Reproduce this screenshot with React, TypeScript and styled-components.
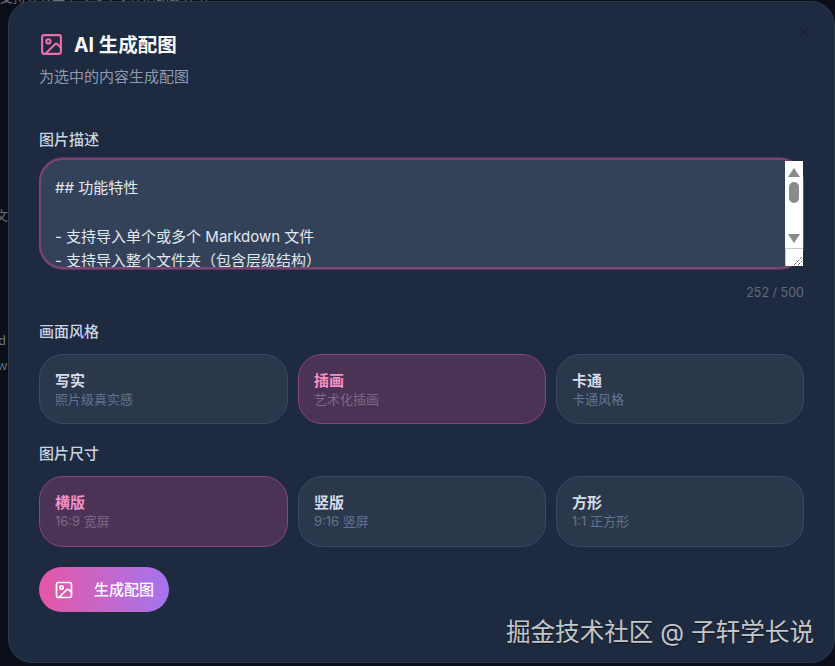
import React from "react";
import styled, { createGlobalStyle } from "styled-components";
import { Image as ImageIcon, X } from "lucide-react";

const Global = createGlobalStyle`
  html, body { margin: 0; padding: 0; width: 835px; height: 666px; overflow: hidden; background: #0b0f1a; }
  * { box-sizing: border-box; }
  body { font-family: Inter, "Noto Sans CJK SC", "Noto Sans", sans-serif; }
`;

const Page = styled.div`
  position: relative;
  width: 835px;
  height: 666px;
  padding: 1px 0 3px 8px;
  overflow: hidden;
`;

const BackdropText = styled.span<{ $x: number; $y: number }>`
  position: absolute;
  left: ${(p) => p.$x}px;
  top: ${(p) => p.$y}px;
  font-size: 13px;
  line-height: 16px;
  color: #6b6f78;
  white-space: nowrap;
  font-family: "Noto Sans CJK SC", "DejaVu Sans Mono", monospace;
`;

const Dialog = styled.div`
  position: relative;
  width: 827px;
  height: 662px;
  padding: 30px 30px 0;
  border-radius: 24px;
  border: 1px solid #2c3a4e;
  background: #1e2a3f;
`;

const CloseButton = styled.button`
  position: absolute;
  right: 23px;
  top: 23px;
  padding: 0;
  width: 14px;
  height: 14px;
  display: flex;
  border: 0;
  background: none;
  color: #172135;
`;

const TitleRow = styled.div`
  display: flex;
  align-items: center;
  gap: 10px;
  height: 24px;
  color: #ec6fae;
`;

const Title = styled.h2`
  margin: 2px 0 0;
  font-size: 19.5px;
  line-height: 24px;
  font-weight: 700;
  color: #f8fafc;
`;

const Subtitle = styled.p`
  margin: 11px 0 0;
  font-size: 15px;
  line-height: 20px;
  color: #8d9bb0;
`;

const FieldLabel = styled.div<{ $top: number }>`
  margin-top: ${(p) => p.$top}px;
  font-size: 15px;
  line-height: 20px;
  font-weight: 500;
  color: #cbd5e1;
`;

const TextFrame = styled.div`
  position: relative;
  margin-top: 8px;
  height: 111px;
  border: 2px solid #7a4574;
  box-shadow: 0 -1px 0 rgba(122, 69, 116, 0.6), 0 1px 0 rgba(122, 69, 116, 0.6);
  border-radius: 24px;
  background: #334259;
`;

const TextContent = styled.div`
  height: 100%;
  overflow: hidden;
  padding: 15.5px 14px 0;
  border-radius: 22px;
  font-size: 15px;
  line-height: 24.5px;
  color: #e2e8f0;
  white-space: pre-wrap;
`;

const ScrollBar = styled.div`
  position: absolute;
  right: -1px;
  top: 1px;
  bottom: 1px;
  width: 18px;
  background: #fff;
  display: flex;
  flex-direction: column;
  align-items: center;
`;

const ScrollArrow = styled.svg<{ $top: number }>`
  margin-top: ${(p) => p.$top}px;
  width: 12px;
  height: 9px;
  flex: none;
  fill: #8a8a8a;
`;

const ScrollThumb = styled.div`
  margin-top: 5px;
  width: 10px;
  height: 21px;
  flex: none;
  border-radius: 5px;
  background: #8a8a8a;
`;

const Resizer = styled.div`
  margin-top: auto;
  width: 100%;
  height: 18px;
  flex: none;
  border-top: 1px solid #c8c8c8;
  border-left: 1px solid #c8c8c8;
  display: flex;
  align-items: flex-end;
  justify-content: flex-end;
`;

const Counter = styled.div`
  margin-top: 15px;
  text-align: right;
  font-size: 12.5px;
  line-height: 18px;
  color: #5f6d82;
`;

const OptionGrid = styled.div`
  margin-top: 12px;
  display: grid;
  grid-template-columns: 249px 248px 248px;
  gap: 10px;
`;

const OptionCard = styled.div<{ $active?: boolean; $h: number }>`
  height: ${(p) => p.$h}px;
  padding: 16px 15px 0;
  border-radius: 24px;
  border: 1px solid ${(p) => (p.$active ? "#8b4675" : "#3a4a60")};
  background: ${(p) => (p.$active ? "#4a3355" : "#2b384c")};
`;

const OptionName = styled.div<{ $active?: boolean }>`
  font-size: 15px;
  line-height: 20px;
  font-weight: 600;
  color: ${(p) => (p.$active ? "#f490c4" : "#d5dde8")};
`;

const OptionHint = styled.div<{ $active?: boolean }>`
  font-size: 13px;
  line-height: 17px;
  color: ${(p) => (p.$active ? "#7d6a85" : "#64748b")};
`;

const GenerateButton = styled.button`
  margin-top: 20px;
  display: flex;
  align-items: center;
  gap: 20px;
  width: 130px;
  height: 45px;
  padding: 0 15px;
  border: 0;
  border-radius: 23px;
  background: linear-gradient(90deg, #e557a5, #a574ee);
  color: #fff;
  font-family: inherit;
  font-size: 15px;
  font-weight: 500;
  white-space: nowrap;
`;

const ButtonLabel = styled.span`
  margin-bottom: 3px;
`;

const Watermark = styled.div`
  position: absolute;
  right: 21px;
  top: 615px;
  font-size: 24.6px;
  line-height: 34px;
  color: rgba(255, 255, 255, 0.76);
  text-shadow: 0 1px 1px rgba(0, 0, 0, 0.5);
  white-space: nowrap;
`;

type Option = { name: string; hint: string; active?: boolean };
const styles: Option[] = [
  { name: "写实", hint: "照片级真实感" },
  { name: "插画", hint: "艺术化插画", active: true },
  { name: "卡通", hint: "卡通风格" },
];
const sizes: Option[] = [
  { name: "横版", hint: "16:9 宽屏", active: true },
  { name: "竖版", hint: "9:16 竖屏" },
  { name: "方形", hint: "1:1 正方形" },
];

function Options({ items, height }: { items: Option[]; height: number }) {
  return (
    <OptionGrid>
      {items.map((o) => (
        <OptionCard key={o.name} $active={o.active} $h={height}>
          <OptionName $active={o.active}>{o.name}</OptionName>
          <OptionHint $active={o.active}>{o.hint}</OptionHint>
        </OptionCard>
      ))}
    </OptionGrid>
  );
}

export default function App() {
  return (
    <Page>
      <Global />
      <BackdropText $x={0} $y={-11}>支持导入单个或多个文件的功能介绍</BackdropText>
      <BackdropText $x={-5} $y={207}>文</BackdropText>
      <BackdropText $x={-2} $y={332}>d</BackdropText>
      <BackdropText $x={-3} $y={357}>w</BackdropText>
      <Dialog>
        <CloseButton aria-label="关闭">
          <X size={14} strokeWidth={2} />
        </CloseButton>
        <TitleRow>
          <ImageIcon size={25} strokeWidth={2} />
          <Title>AI 生成配图</Title>
        </TitleRow>
        <Subtitle>为选中的内容生成配图</Subtitle>
        <FieldLabel $top={43}>图片描述</FieldLabel>
        <TextFrame>
          <TextContent>{"## 功能特性\n\n- 支持导入单个或多个 Markdown 文件\n- 支持导入整个文件夹（包含层级结构）\n- 自动解析文件内容"}</TextContent>
          <ScrollBar>
            <ScrollArrow $top={7} viewBox="0 0 12 9"><path d="M6 0 12 9H0Z" /></ScrollArrow>
            <ScrollThumb />
            <ScrollArrow $top={31} viewBox="0 0 12 9"><path d="M0 0H12L6 9Z" /></ScrollArrow>
            <Resizer>
              <svg width="10" height="10" viewBox="0 0 10 10" fill="none" stroke="#666" strokeWidth="1" strokeDasharray="3 1">
                <path d="M1 9 9 1M5 9 9 5" />
              </svg>
            </Resizer>
          </ScrollBar>
        </TextFrame>
        <Counter>252 / 500</Counter>
        <FieldLabel $top={20}>画面风格</FieldLabel>
        <Options items={styles} height={70} />
        <FieldLabel $top={20}>图片尺寸</FieldLabel>
        <Options items={sizes} height={71} />
        <GenerateButton>
          <ImageIcon size={20} strokeWidth={2} />
          <ButtonLabel>生成配图</ButtonLabel>
        </GenerateButton>
      </Dialog>
      <Watermark>掘金技术社区 @ 子轩学长说</Watermark>
    </Page>
  );
}
